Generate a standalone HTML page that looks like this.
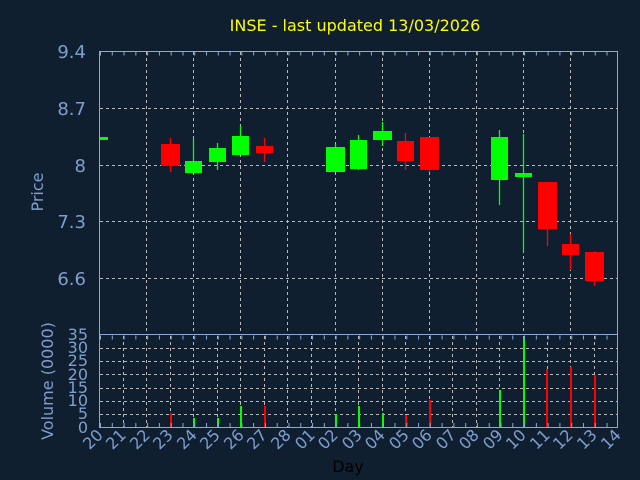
<!DOCTYPE html>
<html><head><meta charset="utf-8"><style>
html,body{margin:0;padding:0;background:#0f1f30;}
svg{display:block;font-family:"DejaVu Sans","Liberation Sans",sans-serif;}
</style></head><body>
<svg width="640" height="480" viewBox="0 0 640 480">
<rect width="640" height="480" fill="#0f1f30"/>
<text x="355" y="31" fill="#ffff00" font-size="16" text-anchor="middle">INSE - last updated 13/03/2026</text>
<g stroke="#b8b8b8" stroke-width="1" stroke-dasharray="3 3" fill="none">
<line x1="100" y1="108.5" x2="617" y2="108.5"/>
<line x1="100" y1="165.5" x2="617" y2="165.5"/>
<line x1="100" y1="221.5" x2="617" y2="221.5"/>
<line x1="100" y1="278.5" x2="617" y2="278.5"/>
<line x1="146.5" y1="52" x2="146.5" y2="334"/>
<line x1="193.5" y1="52" x2="193.5" y2="334"/>
<line x1="240.5" y1="52" x2="240.5" y2="334"/>
<line x1="287.5" y1="52" x2="287.5" y2="334"/>
<line x1="335.5" y1="52" x2="335.5" y2="334"/>
<line x1="382.5" y1="52" x2="382.5" y2="334"/>
<line x1="429.5" y1="52" x2="429.5" y2="334"/>
<line x1="476.5" y1="52" x2="476.5" y2="334"/>
<line x1="523.5" y1="52" x2="523.5" y2="334"/>
<line x1="570.5" y1="52" x2="570.5" y2="334"/>
<line x1="100" y1="414.5" x2="617" y2="414.5"/>
<line x1="100" y1="401.5" x2="617" y2="401.5"/>
<line x1="100" y1="388.5" x2="617" y2="388.5"/>
<line x1="100" y1="374.5" x2="617" y2="374.5"/>
<line x1="100" y1="361.5" x2="617" y2="361.5"/>
<line x1="100" y1="348.5" x2="617" y2="348.5"/>
<line x1="123.5" y1="336" x2="123.5" y2="427"/>
<line x1="146.5" y1="336" x2="146.5" y2="427"/>
<line x1="170.5" y1="336" x2="170.5" y2="427"/>
<line x1="193.5" y1="336" x2="193.5" y2="427"/>
<line x1="217.5" y1="336" x2="217.5" y2="427"/>
<line x1="240.5" y1="336" x2="240.5" y2="427"/>
<line x1="264.5" y1="336" x2="264.5" y2="427"/>
<line x1="287.5" y1="336" x2="287.5" y2="427"/>
<line x1="311.5" y1="336" x2="311.5" y2="427"/>
<line x1="335.5" y1="336" x2="335.5" y2="427"/>
<line x1="358.5" y1="336" x2="358.5" y2="427"/>
<line x1="382.5" y1="336" x2="382.5" y2="427"/>
<line x1="405.5" y1="336" x2="405.5" y2="427"/>
<line x1="429.5" y1="336" x2="429.5" y2="427"/>
<line x1="452.5" y1="336" x2="452.5" y2="427"/>
<line x1="476.5" y1="336" x2="476.5" y2="427"/>
<line x1="499.5" y1="336" x2="499.5" y2="427"/>
<line x1="523.5" y1="336" x2="523.5" y2="427"/>
<line x1="547.5" y1="336" x2="547.5" y2="427"/>
<line x1="570.5" y1="336" x2="570.5" y2="427"/>
<line x1="594.5" y1="336" x2="594.5" y2="427"/>
</g>
<g stroke-width="1.3">
<rect x="100" y="137" width="8" height="3" fill="#00ff00"/>
<line x1="170.5" y1="138" x2="170.5" y2="172" stroke="#ff0000"/><rect x="161" y="144" width="19" height="22" fill="#ff0000"/>
<line x1="193.5" y1="139" x2="193.5" y2="173" stroke="#00ff00"/><rect x="185" y="161" width="17" height="12" fill="#00ff00"/>
<line x1="217.5" y1="143" x2="217.5" y2="170" stroke="#00ff00"/><rect x="209" y="148" width="17" height="14" fill="#00ff00"/>
<line x1="240.5" y1="126" x2="240.5" y2="155" stroke="#00ff00"/><rect x="232" y="136" width="17" height="19" fill="#00ff00"/>
<line x1="264.5" y1="138" x2="264.5" y2="162" stroke="#ff0000"/><rect x="256" y="146" width="17" height="7" fill="#ff0000"/>
<line x1="335.5" y1="144" x2="335.5" y2="172" stroke="#00ff00"/><rect x="326" y="147" width="19" height="25" fill="#00ff00"/>
<line x1="358.5" y1="135" x2="358.5" y2="170" stroke="#00ff00"/><rect x="350" y="140" width="17" height="29" fill="#00ff00"/>
<line x1="382.5" y1="122" x2="382.5" y2="146" stroke="#00ff00"/><rect x="373" y="131" width="19" height="9" fill="#00ff00"/>
<line x1="405.5" y1="133" x2="405.5" y2="170" stroke="#ff0000"/><rect x="397" y="141" width="17" height="20" fill="#ff0000"/>
<line x1="429.5" y1="137" x2="429.5" y2="172" stroke="#ff0000"/><rect x="420" y="137" width="19" height="33" fill="#ff0000"/>
<line x1="499.5" y1="130" x2="499.5" y2="205" stroke="#00ff00"/><rect x="491" y="137" width="17" height="43" fill="#00ff00"/>
<line x1="523.5" y1="134" x2="523.5" y2="252" stroke="#00ff00"/><rect x="515" y="173" width="17" height="4" fill="#00ff00"/>
<line x1="547.5" y1="182" x2="547.5" y2="246" stroke="#ff0000"/><rect x="538" y="182" width="19" height="47" fill="#ff0000"/>
<line x1="570.5" y1="234" x2="570.5" y2="270" stroke="#ff0000"/><rect x="562" y="244" width="17" height="11" fill="#ff0000"/>
<line x1="594.5" y1="251" x2="594.5" y2="286" stroke="#ff0000"/><rect x="585" y="252" width="19" height="29" fill="#ff0000"/>
</g>
<g shape-rendering="crispEdges">
<rect x="170" y="413" width="2" height="14" fill="#ff0000"/>
<rect x="193" y="418" width="2" height="9" fill="#00ff00"/>
<rect x="217" y="418" width="2" height="9" fill="#00ff00"/>
<rect x="240" y="406" width="2" height="21" fill="#00ff00"/>
<rect x="264" y="406" width="2" height="21" fill="#ff0000"/>
<rect x="335" y="414" width="2" height="13" fill="#00ff00"/>
<rect x="358" y="406" width="2" height="21" fill="#00ff00"/>
<rect x="382" y="413" width="2" height="14" fill="#00ff00"/>
<rect x="405" y="415" width="2" height="12" fill="#ff0000"/>
<rect x="429" y="400" width="2" height="27" fill="#ff0000"/>
<rect x="499" y="390" width="2" height="37" fill="#00ff00"/>
<rect x="523" y="337" width="2" height="90" fill="#00ff00"/>
<rect x="546" y="369" width="2" height="58" fill="#ff0000"/>
<rect x="570" y="367" width="2" height="60" fill="#ff0000"/>
<rect x="594" y="375" width="2" height="52" fill="#ff0000"/>
</g>
<g stroke="#8aa8d8" fill="none" stroke-width="1">
<rect x="99.5" y="51.5" width="518" height="283"/>
<rect x="99.5" y="334.5" width="518" height="93"/>
<line x1="100" y1="53.5" x2="617" y2="53.5" stroke-width="4" stroke-dasharray="1 10.78"/>
<line x1="100" y1="337.5" x2="617" y2="337.5" stroke-width="4" stroke-dasharray="1 10.78"/>
<line x1="100" y1="425" x2="617" y2="425" stroke-width="4" stroke-dasharray="1 10.78"/>
</g>
<g fill="#7f9fcf" font-size="18" text-anchor="end">
<text x="86" y="58">9.4</text>
<text x="86" y="115">8.7</text>
<text x="86" y="172">8</text>
<text x="86" y="228">7.3</text>
<text x="86" y="285">6.6</text>
</g>
<g fill="#7f9fcf" font-size="16" text-anchor="end">
<text x="88" y="340">35</text>
<text x="88" y="353">30</text>
<text x="88" y="366">25</text>
<text x="88" y="380">20</text>
<text x="88" y="393">15</text>
<text x="88" y="406">10</text>
<text x="88" y="419">5</text>
<text x="88" y="433">0</text>
</g>
<text transform="translate(43,192) rotate(-90)" fill="#7f9fcf" font-size="16" text-anchor="middle">Price</text>
<text transform="translate(53,381) rotate(-90)" fill="#7f9fcf" font-size="16" text-anchor="middle">Volume (0000)</text>
<text x="348" y="472" fill="#000" font-size="16" text-anchor="middle">Day</text>
<g fill="#7f9fcf" font-size="16" text-anchor="end">
<text transform="translate(104,436) rotate(-45)">20</text>
<text transform="translate(127,436) rotate(-45)">21</text>
<text transform="translate(151,436) rotate(-45)">22</text>
<text transform="translate(174,436) rotate(-45)">23</text>
<text transform="translate(198,436) rotate(-45)">24</text>
<text transform="translate(221,436) rotate(-45)">25</text>
<text transform="translate(245,436) rotate(-45)">26</text>
<text transform="translate(268,436) rotate(-45)">27</text>
<text transform="translate(292,436) rotate(-45)">28</text>
<text transform="translate(316,436) rotate(-45)">01</text>
<text transform="translate(339,436) rotate(-45)">02</text>
<text transform="translate(363,436) rotate(-45)">03</text>
<text transform="translate(386,436) rotate(-45)">04</text>
<text transform="translate(410,436) rotate(-45)">05</text>
<text transform="translate(433,436) rotate(-45)">06</text>
<text transform="translate(457,436) rotate(-45)">07</text>
<text transform="translate(480,436) rotate(-45)">08</text>
<text transform="translate(504,436) rotate(-45)">09</text>
<text transform="translate(527,436) rotate(-45)">10</text>
<text transform="translate(551,436) rotate(-45)">11</text>
<text transform="translate(574,436) rotate(-45)">12</text>
<text transform="translate(598,436) rotate(-45)">13</text>
<text transform="translate(622,436) rotate(-45)">14</text>
</g>
</svg>
</body></html>
